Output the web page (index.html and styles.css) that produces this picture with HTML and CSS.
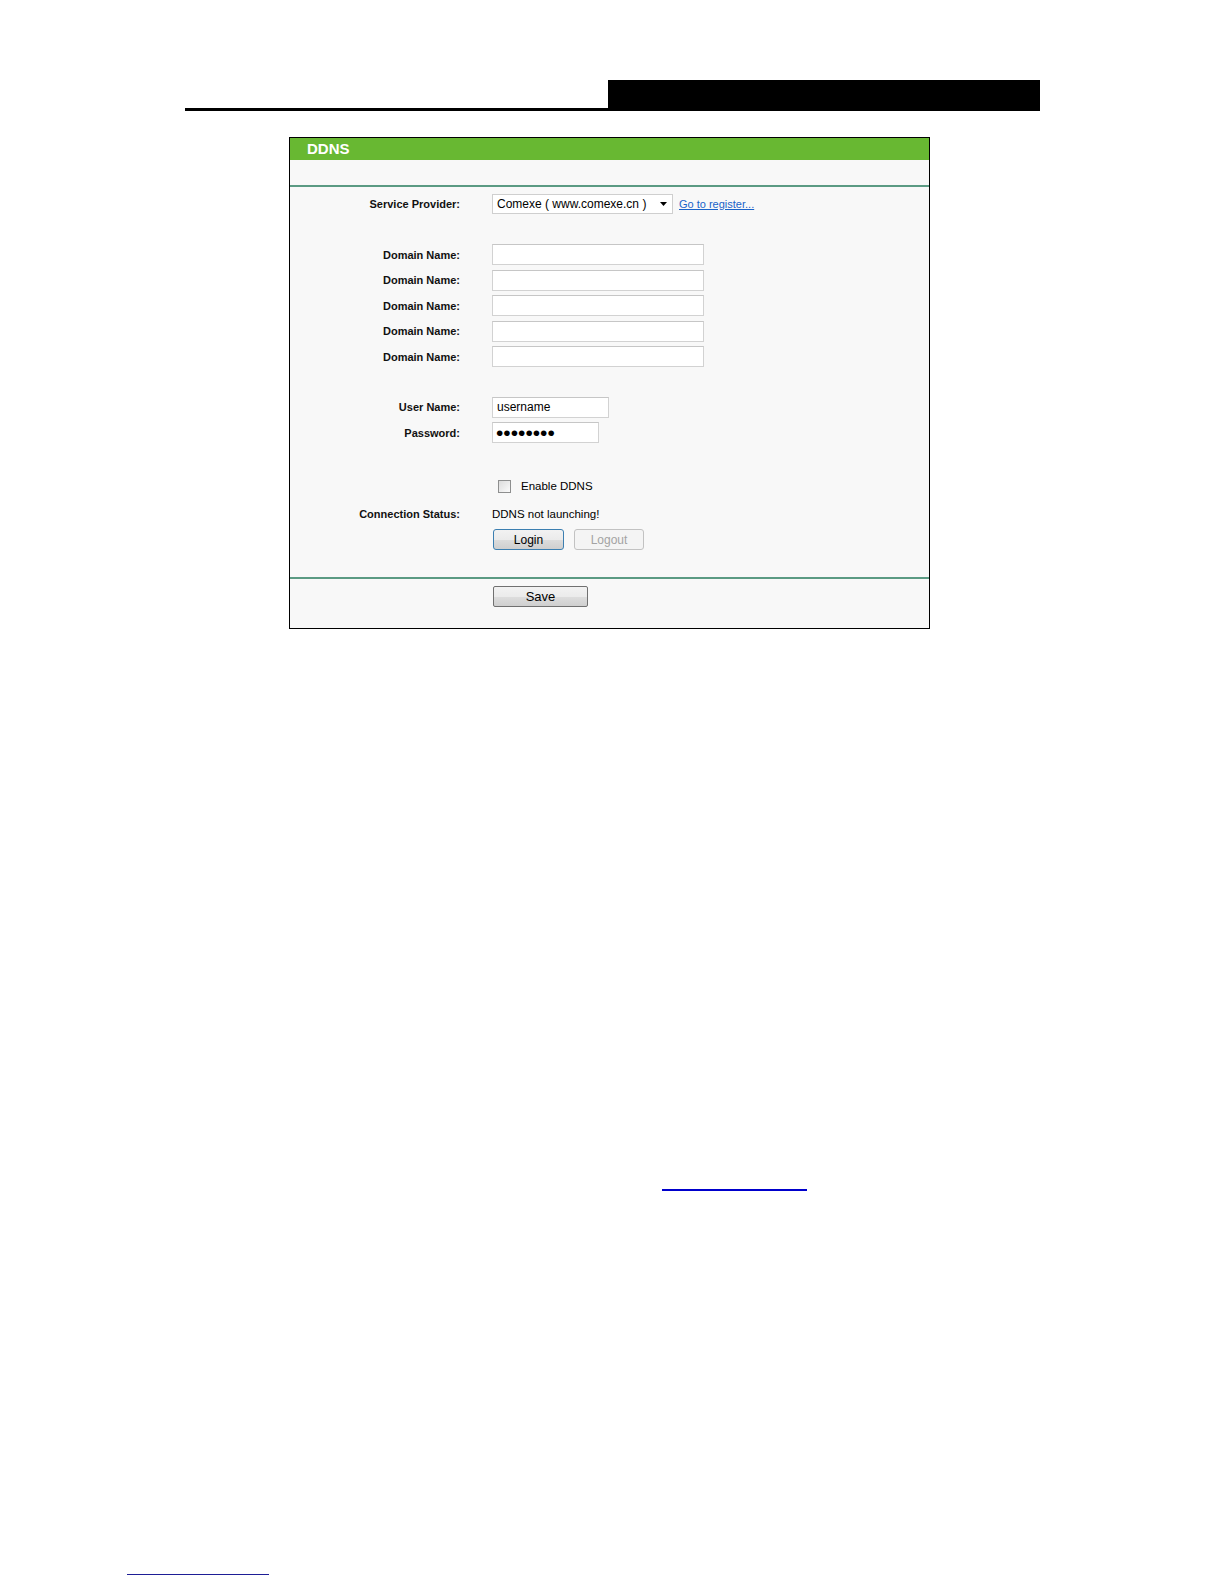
FILE: index.html
```html
<!DOCTYPE html>
<html>
<head>
<meta charset="utf-8">
<title>DDNS</title>
<link rel="stylesheet" href="styles.css">
</head>
<body>
<div class="page">
  <div class="doc-header">
    <div class="rule"></div>
    <div class="tab"></div>
  </div>

  <div class="panel">
    <div class="panel-title">DDNS</div>
    <div class="panel-sub"></div>

    <div class="form">
      <div class="row">
        <div class="lbl">Service Provider:</div>
        <div class="val">
          <div class="select">
            <span>Comexe ( www.comexe.cn )</span>
            <svg class="caret" width="7" height="4" viewBox="0 0 7 4"><path d="M0 0H7L3.5 4Z" fill="#000"/></svg>
          </div>
          <a class="reg" href="#">Go to register...</a>
        </div>
      </div>

      <div class="row sp-blank">
        <div class="lbl">Domain Name:</div>
        <div class="val"><input class="field wide" type="text"></div>
      </div>
      <div class="row">
        <div class="lbl">Domain Name:</div>
        <div class="val"><input class="field wide" type="text"></div>
      </div>
      <div class="row">
        <div class="lbl">Domain Name:</div>
        <div class="val"><input class="field wide" type="text"></div>
      </div>
      <div class="row">
        <div class="lbl">Domain Name:</div>
        <div class="val"><input class="field wide" type="text"></div>
      </div>
      <div class="row">
        <div class="lbl">Domain Name:</div>
        <div class="val"><input class="field wide" type="text"></div>
      </div>

      <div class="row sp-user">
        <div class="lbl">User Name:</div>
        <div class="val"><input class="field user" type="text" value="username"></div>
      </div>
      <div class="row">
        <div class="lbl">Password:</div>
        <div class="val"><div class="field pass"><span class="dots">••••••••</span></div></div>
      </div>

      <div class="row sp-check">
        <div class="lbl"></div>
        <div class="val"><span class="checkbox"></span><span class="check-text">Enable DDNS</span></div>
      </div>
      <div class="row sp-status">
        <div class="lbl">Connection Status:</div>
        <div class="val status">DDNS not launching!</div>
      </div>
      <div class="row">
        <div class="lbl"></div>
        <div class="val">
          <button class="btn login" type="button">Login</button>
          <button class="btn logout" type="button" disabled>Logout</button>
        </div>
      </div>
    </div>

    <div class="panel-foot">
      <button class="btn save" type="button">Save</button>
    </div>
  </div>

  <div class="link-line first"></div>
  <div class="link-line second"></div>
</div>
</body>
</html>
```

FILE: styles.css
```css
body {
  margin: 0;
  background: #ffffff;
  font-family: "Liberation Sans", Arial, sans-serif;
  color: #000;
}

.page {
  padding-top: 80px;
}

.doc-header {
  display: flex;
  align-items: flex-end;
  margin-left: 185px;
  width: 855px;
}

.rule {
  flex: 1;
  height: 3px;
  background: #000;
}

.tab {
  width: 432px;
  height: 31px;
  background: #000;
}

.panel {
  margin: 26px 0 0 289px;
  width: 641px;
  box-sizing: border-box;
  border: 1px solid #000;
  background: #f8f8f8;
}

.panel-title {
  height: 22px;
  background: #68b832;
  color: #fff;
  font-weight: bold;
  font-size: 15px;
  line-height: 22px;
  padding-left: 17px;
}

.panel-sub {
  height: 25px;
  border-bottom: 2px solid #5b9a83;
}

.form {
  padding: 4px 0 24.5px;
}

.row {
  display: flex;
  align-items: center;
  height: 25.5px;
}

.sp-blank { margin-top: 25.5px; }
.sp-user { margin-top: 25px; }
.sp-check { margin-top: 28px; }
.sp-status { margin-top: 2.5px; }

.lbl {
  width: 170px;
  flex: none;
  text-align: right;
  font-weight: bold;
  font-size: 11px;
  color: #111;
}

.val {
  margin-left: 32px;
  display: flex;
  align-items: center;
  font-size: 12px;
  color: #000;
}

.status {
  font-size: 11.5px;
}

.select {
  width: 181px;
  height: 20px;
  box-sizing: border-box;
  border: 1px solid #cfcfcf;
  background: #fff;
  display: flex;
  align-items: center;
  justify-content: space-between;
  padding: 0 5px 0 4px;
  font-size: 12px;
}

.caret {
  display: block;
}

.reg {
  margin-left: 6px;
  font-size: 11px;
  color: #1a63c9;
  text-decoration: underline;
}

.field {
  height: 21px;
  box-sizing: border-box;
  border: 1px solid #d2d2d2;
  border-top-color: #c6c6c6;
  background: #fff;
  font-family: "Liberation Sans", Arial, sans-serif;
  font-size: 12px;
  padding: 0 4px;
  margin: 0;
  outline: none;
  color: #000;
}

.wide { width: 212px; }
.user { width: 117px; }

.pass {
  width: 107px;
  display: flex;
  align-items: center;
  overflow: hidden;
  padding-left: 3px;
}

.dots {
  font-size: 21px;
  line-height: 19px;
  height: 19px;
  display: block;
}

.checkbox {
  width: 13px;
  height: 13px;
  box-sizing: border-box;
  margin-left: 6px;
  border: 1px solid #8e8f8f;
  background: linear-gradient(135deg, #dcdcdc, #fbfbfb);
}

.check-text {
  margin-left: 10px;
  font-size: 11.5px;
}

.btn {
  height: 21px;
  box-sizing: border-box;
  font-family: "Liberation Sans", Arial, sans-serif;
  font-size: 12px;
  padding: 0;
  border-radius: 3px;
  color: #000;
  margin: 0;
}

.login {
  width: 71px;
  margin-left: 1px;
  border: 1px solid #3c7fb1;
  background: linear-gradient(#f2f2f2 0%, #ebebeb 50%, #dddddd 51%, #cfcfcf 100%);
}

.logout {
  width: 70px;
  margin-left: 10px;
  border: 1px solid #c2c2c2;
  background: #f4f4f4;
  color: #a3a3a3;
}

.panel-foot {
  border-top: 2px solid #5b9a83;
  padding: 7px 0 21px 203px;
}

.save {
  display: block;
  width: 95px;
  font-size: 13px;
  border: 1px solid #707070;
  border-radius: 2px;
  background: linear-gradient(#f2f2f2 0%, #ebebeb 50%, #dddddd 51%, #cfcfcf 100%);
}

.link-line {
  display: block;
}

.link-line.first {
  margin: 560px 0 0 662px;
  width: 145px;
  height: 2px;
  background: #0000cc;
}

.link-line.second {
  margin: 383px 0 0 127px;
  width: 142px;
  height: 1px;
  background: #1e1e96;
}
```
